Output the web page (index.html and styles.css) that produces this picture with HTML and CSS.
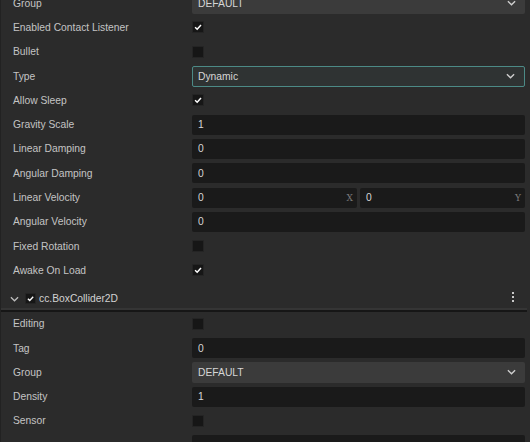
FILE: index.html
```html
<!DOCTYPE html>
<html>
<head>
<meta charset="utf-8">
<link rel="stylesheet" href="styles.css">
</head>
<body>
<div class="panel">
  <div class="row"><div class="label">Group</div><div class="value"><div class="select"><span>DEFAULT</span><svg class="chev" viewBox="0 0 10 6" width="9" height="6"><path d="M1 1 L5 5 L9 1" fill="none" stroke="#cfcfcf" stroke-width="1.5"/></svg></div></div></div>
  <div class="row"><div class="label">Enabled Contact Listener</div><div class="value"><span class="cb checked"><svg viewBox="0 0 12 12" width="12" height="12"><path d="M2.5 6.2 L5 8.6 L9.6 3.6" fill="none" stroke="#fff" stroke-width="1.8"/></svg></span></div></div>
  <div class="row"><div class="label">Bullet</div><div class="value"><span class="cb"></span></div></div>
  <div class="row"><div class="label">Type</div><div class="value"><div class="select focus"><span>Dynamic</span><svg class="chev" viewBox="0 0 10 6" width="9" height="6"><path d="M1 1 L5 5 L9 1" fill="none" stroke="#cfcfcf" stroke-width="1.5"/></svg></div></div></div>
  <div class="row"><div class="label">Allow Sleep</div><div class="value"><span class="cb checked"><svg viewBox="0 0 12 12" width="12" height="12"><path d="M2.5 6.2 L5 8.6 L9.6 3.6" fill="none" stroke="#fff" stroke-width="1.8"/></svg></span></div></div>
  <div class="row"><div class="label">Gravity Scale</div><div class="value"><div class="input">1</div></div></div>
  <div class="row"><div class="label">Linear Damping</div><div class="value"><div class="input">0</div></div></div>
  <div class="row"><div class="label">Angular Damping</div><div class="value"><div class="input">0</div></div></div>
  <div class="row"><div class="label">Linear Velocity</div><div class="value vec"><div class="input"><span>0</span><span class="axis">X</span></div><div class="input"><span>0</span><span class="axis">Y</span></div></div></div>
  <div class="row"><div class="label">Angular Velocity</div><div class="value"><div class="input">0</div></div></div>
  <div class="row"><div class="label">Fixed Rotation</div><div class="value"><span class="cb"></span></div></div>
  <div class="row"><div class="label">Awake On Load</div><div class="value"><span class="cb checked"><svg viewBox="0 0 12 12" width="12" height="12"><path d="M2.5 6.2 L5 8.6 L9.6 3.6" fill="none" stroke="#fff" stroke-width="1.8"/></svg></span></div></div>
  <div class="header">
    <svg class="hchev" viewBox="0 0 10 6" width="9" height="6"><path d="M1 1 L5 5 L9 1" fill="none" stroke="#bdbdbd" stroke-width="1.4"/></svg>
    <span class="cb checked small"><svg viewBox="0 0 12 12" width="11" height="11"><path d="M2.5 6.2 L5 8.6 L9.6 3.6" fill="none" stroke="#fff" stroke-width="1.8"/></svg></span>
    <span class="title">cc.BoxCollider2D</span>
    <span class="kebab"><i></i><i></i><i></i></span>
  </div>
  <div class="row"><div class="label">Editing</div><div class="value"><span class="cb"></span></div></div>
  <div class="row"><div class="label">Tag</div><div class="value"><div class="input">0</div></div></div>
  <div class="row"><div class="label">Group</div><div class="value"><div class="select"><span>DEFAULT</span><svg class="chev" viewBox="0 0 10 6" width="9" height="6"><path d="M1 1 L5 5 L9 1" fill="none" stroke="#cfcfcf" stroke-width="1.5"/></svg></div></div></div>
  <div class="row"><div class="label">Density</div><div class="value"><div class="input">1</div></div></div>
  <div class="row"><div class="label">Sensor</div><div class="value"><span class="cb"></span></div></div>
  <div class="row"><div class="label"></div><div class="value"><div class="input"></div></div></div>
</div>
</body>
</html>
```
FILE: styles.css
```css
html, body {
  margin: 0;
  padding: 0;
  background: #2b2b2b;
  overflow: hidden;
}
.panel {
  width: 530px;
  height: 442px;
  overflow: hidden;
  font-family: "Liberation Sans", Arial, sans-serif;
  font-size: 10.3px;
  color: #c8c8c8;
  border-left: 1px solid #222;
  box-sizing: border-box;
}
.panel > .row:first-child {
  margin-top: -9px;
}
.row {
  display: flex;
  align-items: center;
  height: 24.3px;
}
.label {
  width: 191px;
  padding-left: 12px;
  box-sizing: border-box;
  flex: none;
  color: #c4c4c4;
}
.value {
  flex: 1;
  display: flex;
  align-items: center;
  padding-right: 5px;
}
.input {
  flex: 1;
  height: 20px;
  background: #1a1a1a;
  border-radius: 2px;
  box-sizing: border-box;
  padding-left: 6px;
  display: flex;
  align-items: center;
  justify-content: space-between;
  color: #d6d6d6;
}
.vec {
  gap: 3px;
}
.axis {
  font-family: "DejaVu Serif", serif;
  font-size: 9px;
  color: #7a7a7a;
  padding-right: 4px;
}
.select {
  flex: 1;
  height: 21px;
  background: #3b3b3b;
  border-radius: 2px;
  box-sizing: border-box;
  padding: 0 9px 0 6px;
  display: flex;
  align-items: center;
  justify-content: space-between;
  color: #d6d6d6;
}
.select.focus {
  background: #2f3333;
  border: 1px solid #4c8a86;
  padding-left: 5px;
}
.cb {
  width: 12px;
  height: 12px;
  background: #161616;
  border: 1px solid #242424;
  box-sizing: border-box;
  border-radius: 1px;
  display: inline-flex;
  align-items: center;
  justify-content: center;
}
.cb svg {
  display: block;
}
.header {
  height: 29px;
  display: flex;
  align-items: center;
  position: relative;
  border-bottom: 2px solid #161616;
  box-shadow: inset 0 -2px 0 #353535;
  margin-right: 3px;
  box-sizing: border-box;
  padding-top: 5px;
}
.hchev {
  margin-left: 9px;
  margin-right: 6px;
}
.cb.small {
  width: 11px;
  height: 11px;
  margin-right: 3px;
}
.title {
  color: #d2d2d2;
  font-size: 10.3px;
}
.kebab {
  position: absolute;
  right: 13px;
  top: 9px;
  display: flex;
  flex-direction: column;
  gap: 2px;
}
.kebab i {
  display: block;
  width: 2px;
  height: 2px;
  background: #c8c8c8;
}
```
